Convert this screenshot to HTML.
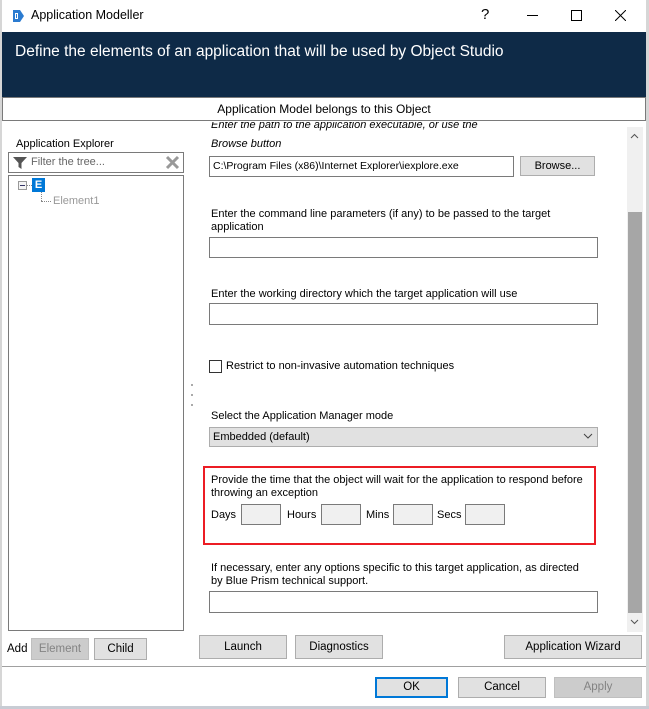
<!DOCTYPE html>
<html><head><meta charset="utf-8">
<style>
*{box-sizing:border-box;margin:0;padding:0}
body{width:649px;height:709px;position:relative;background:#fff;font-family:"Liberation Sans",sans-serif;font-size:12px;color:#000;overflow:hidden}
.a{position:absolute}
.btn{position:absolute;background:#e1e1e1;border:1px solid #adadad;text-align:center;font-size:11.5px;line-height:22px}
.tb{position:absolute;background:#fff;border:1px solid #7a7a7a}
.tf{position:absolute;background:#f0f0f0;border:1px solid #7a7a7a}
.lbl{position:absolute;font-size:11px;white-space:nowrap}
</style></head><body>
<div class="a" style="left:0;top:0;width:2px;height:709px;background:#d6d6d6"></div>
<div class="a" style="left:646px;top:0;width:3px;height:709px;background:#d6d6d6"></div>
<div class="a" style="left:0;top:706px;width:649px;height:3px;background:#c8ccd4"></div>
<svg class="a" style="left:11px;top:9px" width="14" height="14" viewBox="0 0 14 14"><path d="M2 1 L9 1 L13 7 L9 13 L2 13 Z" fill="#2b7bd0"/><rect x="4" y="4" width="3" height="6" fill="#fff"/><rect x="5" y="5" width="1" height="4" fill="#2b7bd0"/></svg>
<div class="a" style="left:31px;top:8px;font-size:12.5px">Application Modeller</div>
<div class="a" style="left:481px;top:6px;font-size:15px">?</div>
<div class="a" style="left:527px;top:15px;width:11px;height:1px;background:#000"></div>
<div class="a" style="left:571px;top:10px;width:11px;height:11px;border:1px solid #000"></div>
<svg class="a" style="left:615px;top:10px" width="11" height="11"><path d="M0 0L11 11M11 0L0 11" stroke="#000" stroke-width="1"/></svg>
<div class="a" style="left:2px;top:32px;width:644px;height:65px;background:#0e2a47"></div>
<div class="a" style="left:15px;top:43px;color:#fff;font-size:15.5px">Define the elements of an application that will be used by Object Studio</div>
<div class="a" style="left:2px;top:97px;width:644px;height:24px;border:1px solid #7a7a7a;background:#fff"></div>
<div class="a" style="left:2px;top:102px;width:644px;text-align:center;font-size:12px">Application Model belongs to this Object</div>
<div class="a" style="left:16px;top:138px;font-size:11px">Application Explorer</div>
<div class="tb" style="left:8px;top:152px;width:176px;height:21px"></div>
<svg class="a" style="left:13px;top:156px" width="14" height="14" viewBox="0 0 14 14"><path d="M0 1H14L8.5 7V13L5.5 11V7Z" fill="#555"/></svg>
<div class="a" style="left:31px;top:156px;font-size:11px;color:#666">Filter the tree...</div>
<svg class="a" style="left:165px;top:155px" width="15" height="15"><path d="M2 2L13 13M13 2L2 13" stroke="#999" stroke-width="3"/></svg>
<div class="tb" style="left:8px;top:175px;width:176px;height:456px"></div>
<div class="a" style="left:18px;top:181px;width:9px;height:9px;border:1px solid #999;background:#f4f4f4"></div>
<div class="a" style="left:20px;top:185px;width:5px;height:1px;background:#336"></div>
<div class="a" style="left:27px;top:185px;width:5px;border-top:1px dotted #888"></div>
<div class="a" style="left:32px;top:178px;width:13px;height:14px;background:#0078d7;color:#fff;font-weight:bold;font-size:11px;text-align:center;line-height:14px">E</div>
<div class="a" style="left:41px;top:192px;height:9px;border-left:1px dotted #888"></div>
<div class="a" style="left:41px;top:201px;width:10px;border-top:1px dotted #888"></div>
<div class="a" style="left:53px;top:195px;font-size:11px;color:#999">Element1</div>
<div class="a" style="left:7px;top:643px;font-size:11.5px">Add</div>
<div class="btn" style="left:31px;top:638px;width:58px;height:22px;background:#cccccc;color:#838383;border-color:#bfbfbf;line-height:20px">Element</div>
<div class="btn" style="left:94px;top:638px;width:53px;height:22px;line-height:20px">Child</div>
<div class="a" style="left:191px;top:384px;width:2px;height:2px;background:#aaa"></div>
<div class="a" style="left:191px;top:394px;width:2px;height:2px;background:#aaa"></div>
<div class="a" style="left:191px;top:404px;width:2px;height:2px;background:#aaa"></div>
<div class="lbl" style="left:211px;top:122px;font-style:italic;height:11px;overflow:hidden;line-height:16px;padding-top:0"><div style="margin-top:-5px">Enter the path to the application executable, or use the</div></div>
<div class="lbl" style="left:211px;top:138px;font-style:italic">Browse button</div>
<div class="tb" style="left:209px;top:156px;width:305px;height:21px"></div>
<div class="lbl" style="left:213px;top:160px;font-size:10.5px">C:\Program Files (x86)\Internet Explorer\iexplore.exe</div>
<div class="btn" style="left:520px;top:156px;width:75px;height:20px;line-height:18px;font-size:11px">Browse...</div>
<div class="lbl" style="left:211px;top:208px">Enter the command line parameters (if any) to be passed to the target</div>
<div class="lbl" style="left:211px;top:221px">application</div>
<div class="tb" style="left:209px;top:237px;width:389px;height:21px"></div>
<div class="lbl" style="left:211px;top:288px">Enter the working directory which the target application will use</div>
<div class="tb" style="left:209px;top:303px;width:389px;height:22px"></div>
<div class="a" style="left:209px;top:360px;width:13px;height:13px;border:1px solid #333;background:#fff"></div>
<div class="lbl" style="left:226px;top:360px">Restrict to non-invasive automation techniques</div>
<div class="lbl" style="left:211px;top:410px">Select the Application Manager mode</div>
<div class="a" style="left:209px;top:427px;width:389px;height:20px;background:#e1e1e1;border:1px solid #adadad"></div>
<div class="lbl" style="left:213px;top:431px">Embedded (default)</div>
<svg class="a" style="left:583px;top:433px" width="10" height="7"><path d="M1 1L5 5L9 1" stroke="#444" fill="none"/></svg>
<div class="a" style="left:203px;top:466px;width:393px;height:79px;border:2px solid #ec1c24"></div>
<div class="lbl" style="left:211px;top:474px">Provide the time that the object will wait for the application to respond before</div>
<div class="lbl" style="left:211px;top:487px">throwing an exception</div>
<div class="lbl" style="left:211px;top:509px">Days</div>
<div class="tf" style="left:241px;top:504px;width:40px;height:21px"></div>
<div class="lbl" style="left:287px;top:509px">Hours</div>
<div class="tf" style="left:321px;top:504px;width:40px;height:21px"></div>
<div class="lbl" style="left:366px;top:509px">Mins</div>
<div class="tf" style="left:393px;top:504px;width:40px;height:21px"></div>
<div class="lbl" style="left:437px;top:509px">Secs</div>
<div class="tf" style="left:465px;top:504px;width:40px;height:21px"></div>
<div class="lbl" style="left:211px;top:562px">If necessary, enter any options specific to this target application, as directed</div>
<div class="lbl" style="left:211px;top:575px">by Blue Prism technical support.</div>
<div class="tb" style="left:209px;top:591px;width:389px;height:22px"></div>
<div class="a" style="left:627px;top:127px;width:16px;height:505px;background:#f0f0f0"></div>
<div class="a" style="left:628px;top:212px;width:14px;height:401px;background:#a6a6a6"></div>
<svg class="a" style="left:630px;top:133px" width="9" height="6"><path d="M1 5L4.5 1.5L8 5" stroke="#555" fill="none"/></svg>
<svg class="a" style="left:630px;top:619px" width="9" height="6"><path d="M1 1L4.5 4.5L8 1" stroke="#555" fill="none"/></svg>
<div class="btn" style="left:199px;top:635px;width:88px;height:24px">Launch</div>
<div class="btn" style="left:295px;top:635px;width:88px;height:24px">Diagnostics</div>
<div class="btn" style="left:504px;top:635px;width:138px;height:24px">Application Wizard</div>
<div class="a" style="left:2px;top:666px;width:644px;height:1px;background:#a0a0a0"></div>
<div class="btn" style="left:375px;top:677px;width:73px;height:21px;border:2px solid #0078d7;line-height:17px">OK</div>
<div class="btn" style="left:458px;top:677px;width:88px;height:21px;line-height:19px">Cancel</div>
<div class="btn" style="left:554px;top:677px;width:88px;height:21px;line-height:19px;background:#cccccc;color:#838383;border-color:#bfbfbf">Apply</div>
</body></html>
